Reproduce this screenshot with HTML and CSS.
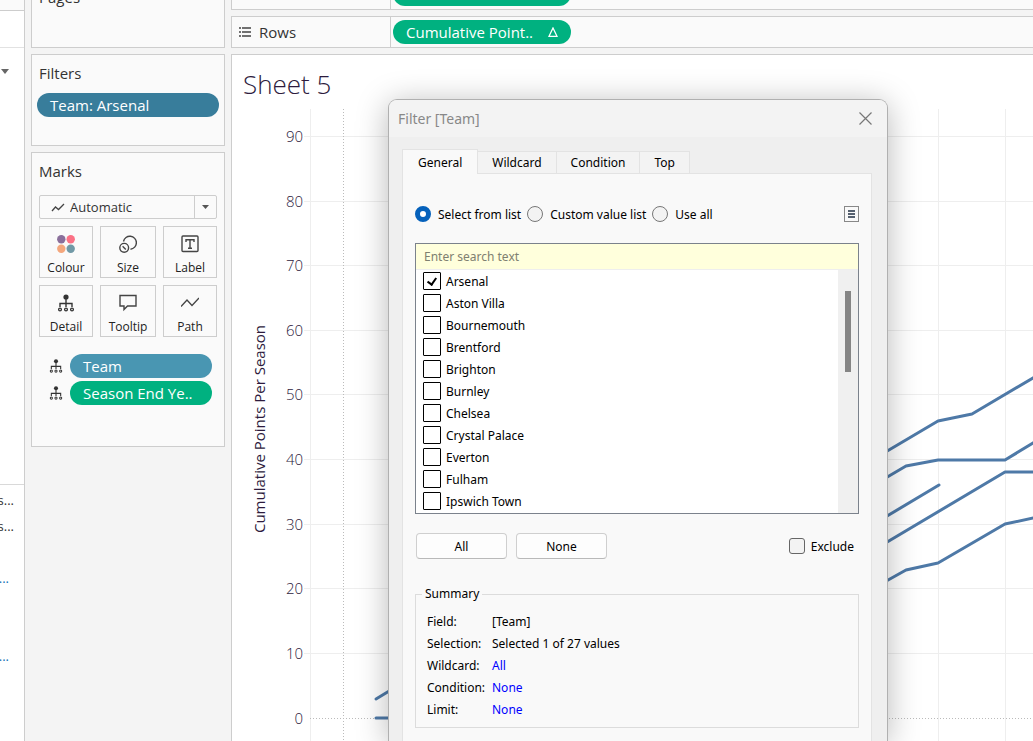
FILE: index.html
```html
<!DOCTYPE html>
<html lang="en-GB">
<head>
    <meta charset="UTF-8">
    <meta name="viewport" content="width=device-width, initial-scale=1.0">
    <title>Sheet 5</title>
    <link rel="stylesheet" href="styles.css">
</head>
<body>

    <!-- Icon used by the Detail button and the detail pills -->
    <svg class="defs" width="0" height="0">
        <symbol id="icon-detail" viewBox="0 0 18 18">
            <circle cx="9" cy="3" r="2.6" fill="#333"/>
            <path d="M9 5v8M3 13v-3.500h12V13" fill="none" stroke="#333" stroke-width="1.400"/>
            <circle cx="3" cy="15.500" r="1.400" fill="none" stroke="#333" stroke-width="1.300"/>
            <circle cx="9" cy="15.500" r="1.400" fill="none" stroke="#333" stroke-width="1.300"/>
            <circle cx="15" cy="15.500" r="1.400" fill="none" stroke="#333" stroke-width="1.300"/>
        </symbol>
    </svg>

    <aside class="data-pane">
        <div class="data-tabs"></div>
        <div class="data-source"></div>
        <div class="data-fields">
            <button class="data-menu" aria-label="Data pane menu">
                <svg width="8" height="5" viewBox="0 0 8 5"><path d="M0 0h8L4 5z" fill="#666"/></svg>
            </button>
        </div>
        <div class="data-list">
            <span class="field">s...</span>
            <span class="field">s...</span>
            <span class="field"></span>
            <span class="field calc">...</span>
            <span class="field"></span>
            <span class="field"></span>
            <span class="field calc">...</span>
        </div>
    </aside>

    <section class="cards">
        <div class="card pages"><h2>Pages</h2></div>

        <div class="card filters">
            <h2>Filters</h2>
            <button class="pill dark">Team: Arsenal</button>
        </div>

        <div class="card marks">
            <h2>Marks</h2>
            <div class="mark-type">
                <svg width="14" height="9" viewBox="0 0 14 9"><path d="M1 8l3.500-4 3 2.500L13 1" fill="none" stroke="#444" stroke-width="1.300"/></svg>
                <select aria-label="Mark type"><option>Automatic</option></select>
                <span class="arrow"><svg width="7" height="4" viewBox="0 0 7 4"><path d="M0 0h7L3.500 4z" fill="#555"/></svg></span>
            </div>
            <div class="mark-buttons">
                <button>
                    <svg width="18" height="18" viewBox="0 0 18 18">
                        <circle cx="4.300" cy="4.300" r="4.200" fill="#8a6f9b"/>
                        <circle cx="13.700" cy="4.300" r="4.200" fill="#fb7185"/>
                        <circle cx="4.300" cy="13.700" r="4.200" fill="#f4a77d"/>
                        <circle cx="13.700" cy="13.700" r="4.200" fill="#7199a6"/>
                    </svg>
                    Colour
                </button>
                <button>
                    <svg width="18" height="18" viewBox="0 0 18 18" fill="none" stroke="#444" stroke-width="1.400">
                        <path d="M4.500 6.500A6.500 6.500 0 1 1 11.500 14.200"/>
                        <circle cx="5.200" cy="12.800" r="4.400"/>
                        <path d="M3.600 11.200l3.200 3.200"/>
                    </svg>
                    Size
                </button>
                <button>
                    <svg width="18" height="18" viewBox="0 0 18 18" fill="none" stroke="#444" stroke-width="1.400">
                        <rect x="1" y="1" width="16" height="15.500" rx="1"/>
                        <path d="M5 7V4.800h8V7M9 4.800v8.400M7 13.200h4"/>
                    </svg>
                    Label
                </button>
                <button>
                    <svg width="18" height="18"><use href="#icon-detail"/></svg>
                    Detail
                </button>
                <button>
                    <svg width="18" height="18" viewBox="0 0 18 18" fill="none" stroke="#444" stroke-width="1.400">
                        <path d="M1 1.500h16v10.500H8.500L5 15.500V12H1z"/>
                    </svg>
                    Tooltip
                </button>
                <button>
                    <svg width="18" height="18" viewBox="0 0 18 18" fill="none" stroke="#444" stroke-width="1.300">
                        <path d="M0 12.500l6-6.500 5 5.500L18 4"/>
                    </svg>
                    Path
                </button>
            </div>
            <div class="mark-pill">
                <svg width="14" height="14"><use href="#icon-detail"/></svg>
                <button class="pill blue">Team</button>
            </div>
            <div class="mark-pill">
                <svg width="14" height="14"><use href="#icon-detail"/></svg>
                <button class="pill green">Season End Ye..</button>
            </div>
        </div>
    </section>

    <main class="view">
        <div class="shelf columns">
            <div class="shelf-name"></div>
            <button class="pill green" aria-label="Columns field"></button>
        </div>
        <div class="shelf">
            <div class="shelf-name">
                <svg width="12" height="10" viewBox="0 0 12 10"><path d="M0 1h2M3 1h9M0 5h2M3 5h9M0 9h2M3 9h9" stroke="#444" stroke-width="1.500"/></svg>
                Rows
            </div>
            <button class="pill green">Cumulative Point..
                <svg width="10" height="10" viewBox="0 0 10 10"><path d="M5 1L9 9.300H1z" fill="none" stroke="#fff" stroke-width="1.300"/></svg>
            </button>
        </div>
        <div class="sheet">
            <h1>Sheet 5</h1>
            <svg class="chart" role="img" aria-label="Cumulative points per season">
                <!-- gridlines, one per 10 points -->
                <g class="grid">
                    <line x1="72" x2="100%" y1="32" y2="32"/>
                    <line x1="72" x2="100%" y1="97" y2="97"/>
                    <line x1="72" x2="100%" y1="161" y2="161"/>
                    <line x1="72" x2="100%" y1="226" y2="226"/>
                    <line x1="72" x2="100%" y1="290" y2="290"/>
                    <line x1="72" x2="100%" y1="355" y2="355"/>
                    <line x1="72" x2="100%" y1="420" y2="420"/>
                    <line x1="72" x2="100%" y1="484" y2="484"/>
                    <line x1="72" x2="100%" y1="549" y2="549"/>
                    <line x1="78" x2="78" y1="5" y2="100%"/>
                    <line x1="706" x2="706" y1="5" y2="100%"/>
                    <line x1="773" x2="773" y1="5" y2="100%"/>
                    <line class="zero" x1="78" x2="100%" y1="614" y2="614"/>
                    <line class="zero" x1="111" x2="111" y1="5" y2="100%"/>
                </g>
                <g class="ticks">
                    <text x="71" y="38">90</text>
                    <text x="71" y="103">80</text>
                    <text x="71" y="167">70</text>
                    <text x="71" y="232">60</text>
                    <text x="71" y="296">50</text>
                    <text x="71" y="361">40</text>
                    <text x="71" y="426">30</text>
                    <text x="71" y="490">20</text>
                    <text x="71" y="555">10</text>
                    <text x="71" y="620">0</text>
                </g>
                <text class="axis-title" transform="translate(33 325) rotate(-90)">Cumulative Points Per Season</text>
                <g class="lines">
                    <polyline points="640,356 706,317 740,310 806,271"/>
                    <polyline points="640,382 674,362 706,356 773,356 806,336"/>
                    <polyline points="640,421 707,381"/>
                    <polyline points="640,447 773,368 806,368"/>
                    <polyline points="640,485 674,466 706,459 773,420 806,413"/>
                    <polyline points="144,595 177,575"/>
                    <polyline points="144,614 177,614"/>
                </g>
            </svg>
        </div>
    </main>

    <div class="dialog" role="dialog" aria-labelledby="dialog-title">
        <div class="title-bar">
            <span id="dialog-title">Filter [Team]</span>
            <button class="close" aria-label="Close">
                <svg width="13" height="13" viewBox="0 0 13 13"><path d="M.5.5l12 12M12.500.5l-12 12" stroke="#777" stroke-width="1.200"/></svg>
            </button>
        </div>
        <div class="tabs">
            <button class="tab active">General</button>
            <button class="tab">Wildcard</button>
            <button class="tab">Condition</button>
            <button class="tab">Top</button>
        </div>
        <div class="panel">
            <div class="modes">
                <label><input type="radio" name="mode" checked>Select from list</label>
                <label><input type="radio" name="mode">Custom value list</label>
                <label><input type="radio" name="mode">Use all</label>
                <button class="list-menu" aria-label="List options">
                    <svg width="7" height="8" viewBox="0 0 7 8"><path d="M0 1h7M0 4h7M0 7h7" stroke="#55606f" stroke-width="1.800"/></svg>
                </button>
            </div>

            <div class="list-box">
                <input type="text" class="search" placeholder="Enter search text" aria-label="Search">
                <div class="list">
                    <div class="values">
                        <label><input type="checkbox" checked>Arsenal</label>
                        <label><input type="checkbox">Aston Villa</label>
                        <label><input type="checkbox">Bournemouth</label>
                        <label><input type="checkbox">Brentford</label>
                        <label><input type="checkbox">Brighton</label>
                        <label><input type="checkbox">Burnley</label>
                        <label><input type="checkbox">Chelsea</label>
                        <label><input type="checkbox">Crystal Palace</label>
                        <label><input type="checkbox">Everton</label>
                        <label><input type="checkbox">Fulham</label>
                        <label><input type="checkbox">Ipswich Town</label>
                    </div>
                    <div class="scrollbar"><div class="thumb"></div></div>
                </div>
            </div>

            <div class="actions">
                <button class="btn">All</button>
                <button class="btn">None</button>
                <label class="exclude"><input type="checkbox">Exclude</label>
            </div>

            <fieldset class="summary">
                <legend>Summary</legend>
                <dl>
                    <dt>Field:</dt><dd>[Team]</dd>
                    <dt>Selection:</dt><dd>Selected 1 of 27 values</dd>
                    <dt>Wildcard:</dt><dd><a href="#">All</a></dd>
                    <dt>Condition:</dt><dd><a href="#">None</a></dd>
                    <dt>Limit:</dt><dd><a href="#">None</a></dd>
                </dl>
            </fieldset>
        </div>
    </div>

</body>
</html>
```
FILE: styles.css
```css
* { box-sizing: border-box; }
body { margin: 0; height: 100vh; display: flex; position: relative; overflow: hidden; background: #f4f4f4; font-family: "Open Sans", sans-serif; font-size: 15px; color: #333; }
button, input, select { font: inherit; color: inherit; margin: 0; padding: 0; border: 0; background: none; }
h1, h2, dl, dd { margin: 0; font-weight: normal; }
svg { display: block; flex: none; }
.defs { position: absolute; }

/* data pane */
.data-pane { flex: none; width: 25px; display: flex; flex-direction: column; background: #fff; border-right: 1px solid #cdcdcd; overflow: hidden; }
.data-tabs { flex: none; height: 11px; background: #fafafa; border-bottom: 1px solid #cdcdcd; }
.data-source { flex: none; height: 37px; border-bottom: 1px solid #e2e2e2; }
.data-fields { flex: none; height: 437px; padding-top: 21px; border-bottom: 1px solid #d9d9d9; }
.data-menu { display: block; margin-left: 1px; }
.data-list { padding-top: 2px; }
.field { display: flex; justify-content: flex-end; width: 14px; height: 26px; line-height: 26px; font-size: 13px; }
.field.calc { width: 9px; color: #1473b8; }

/* cards */
.cards { flex: none; width: 206px; padding: 0 6px; display: flex; flex-direction: column; gap: 6px; }
.card { background: #fafafa; border: 1px solid #cdcdcd; padding: 6px 7px; }
.card h2 { font-size: 15px; line-height: 24px; }
.pages { height: 48px; border-top: 0; padding-top: 0; overflow: hidden; }
.pages h2 { margin-top: -15px; }
.filters { height: 92px; padding-left: 5px; padding-right: 5px; }
.filters h2 { padding-left: 2px; margin-bottom: 8px; }
.marks { height: 295px; }

.pill { display: flex; align-items: center; width: 100%; height: 24px; padding: 0 13px; border-radius: 12px; color: #fff; font-size: 15px; font-weight: 500; white-space: nowrap; }
.pill.dark { background: #387d9b; }
.pill.blue { background: #4996b2; }
.pill.green { background: #00b180; }

.mark-type { display: flex; align-items: center; height: 24px; margin: 12px 0 7px; padding-left: 11px; border: 1px solid #cdcdcd; border-radius: 2px; }
.mark-type select { flex: 1; min-width: 0; padding-left: 5px; appearance: none; line-height: 22px; font-size: 13px; }
.mark-type .arrow { display: flex; align-items: center; justify-content: center; width: 22px; height: 22px; border-left: 1px solid #cdcdcd; }
.mark-buttons { display: grid; grid-template-columns: 54fr 56fr 54fr; gap: 7px; margin-bottom: 17px; }
.mark-buttons button { display: flex; flex-direction: column; align-items: center; gap: 7px; height: 52px; padding-top: 8px; border: 1px solid #cdcdcd; font-size: 12px; line-height: 16px; color: #222; }
.mark-pill { display: flex; align-items: center; gap: 7px; margin-bottom: 3px; padding: 0 5px 0 10px; }

/* shelves and sheet */
.view { flex: 1; min-width: 0; display: flex; flex-direction: column; gap: 6px; }
.shelf { flex: none; display: flex; align-items: center; height: 32px; background: #fafafa; border: 1px solid #cdcdcd; border-right: 0; }
.shelf.columns { height: 10px; align-items: flex-end; padding-bottom: 3px; border-top: 0; overflow: hidden; }
.shelf-name { display: flex; align-items: center; gap: 8px; width: 159px; height: 100%; padding-left: 7px; border-right: 1px solid #cdcdcd; }
.shelf .pill { width: 178px; margin-left: 2px; flex: none; justify-content: space-between; }
.shelf.columns .shelf-name { height: 13px; margin-bottom: -3px; }
.sheet { flex: 1; min-height: 0; display: flex; flex-direction: column; background: #fff; border: 1px solid #cdcdcd; border-right: 0; border-bottom: 0; }
.sheet h1 { padding: 9px 11px 0; font-size: 26px; font-weight: 300; line-height: 40px; color: #2d1b3d; }
.chart { flex: 1; width: 100%; min-height: 0; }
.grid line { stroke: #eee; shape-rendering: crispEdges; }
.grid .zero { stroke: #bbb; stroke-dasharray: 1 2; }
.ticks text { text-anchor: end; font-size: 15px; font-weight: 300; fill: #2d1b3d; }
.axis-title { text-anchor: middle; font-size: 15px; fill: #2d1b3d; }
.lines polyline { fill: none; stroke: #4e79a7; stroke-width: 3; stroke-linecap: round; stroke-linejoin: round; }

/* filter dialog */
.dialog { position: absolute; left: 388px; top: 99px; bottom: 0; width: 500px; background: #efefef; border: 1px solid #b0b0b0; border-bottom: 0; border-radius: 9px 9px 0 0; box-shadow: 0 4px 32px rgba(0, 0, 0, .28); font-family: "Noto Sans", sans-serif; font-size: 12px; color: #000; display: flex; flex-direction: column; }
.title-bar { flex: none; display: flex; align-items: center; justify-content: space-between; height: 37px; padding: 0 15px 0 9px; background: #f3f3f3; border-radius: 8px 8px 0 0; font-size: 14px; color: #888; }
.tabs { flex: none; display: flex; align-items: flex-end; height: 36px; padding: 0 13px; }
.tab { height: 22px; padding: 0 14px; background: #f3f3f3; border: 1px solid #e3e3e3; border-left: 0; border-bottom: 0; }
.tab.active { height: 25px; margin-bottom: -1px; padding: 0 15px; background: #f9f9f9; border-left: 1px solid #e3e3e3; position: relative; }
.panel { flex: 1; margin: 0 15px 0 13px; padding: 32px 12px 0; background: #f9f9f9; border: 1px solid #e3e3e3; border-bottom: 0; }
.modes { display: flex; align-items: center; gap: 6px; height: 16px; margin-bottom: 21px; }
.modes label, .exclude { display: flex; align-items: center; gap: 7px; }
.modes input { appearance: none; width: 16px; height: 16px; border: 1px solid #777; border-radius: 50%; background: #f3f3f3; }
.modes input:checked { border: 5px solid #0561bb; background: #fff; }
.list-menu { display: flex; align-items: center; justify-content: center; width: 15px; height: 16px; margin-left: auto; border: 1px solid #888; }

.list-box { border: 1px solid #7b828c; background: #fff; }
.search { display: block; width: 100%; height: 26px; padding: 0 8px; background: #ffffdc; border-bottom: 1px solid #eee; }
.search::placeholder { color: #808070; opacity: 1; }
.list { display: flex; }
.values { flex: 1; padding: 0 0 1px 7px; }
.values label { display: flex; align-items: center; gap: 5px; height: 22px; }
.values input { appearance: none; width: 18px; height: 18px; border: 1px solid #000; border-radius: 1px; background: #fff; }
.values input:checked::before { content: ""; display: block; width: 4px; height: 7px; margin: 3px 0 0 5px; border: solid #000; border-width: 0 2px 2px 0; transform: rotate(35deg); }
.scrollbar { width: 20px; padding: 21px 7px 0 7px; background: #f0f0f0; }
.thumb { height: 81px; background: #858585; }

.actions { display: flex; align-items: center; gap: 9px; padding: 19px 5px 0 1px; }
.btn { width: 91px; height: 26px; background: #fdfdfd; border: 1px solid #cfcfcf; border-bottom-color: #b9b9b9; border-radius: 4px; }
.exclude { gap: 6px; margin-left: auto; }
.exclude input { appearance: none; width: 16px; height: 16px; border: 1px solid #666; border-radius: 3px; background: #f3f3f3; }
.summary { margin: 26px 0 0; padding: 8px 11px 6px; border: 1px solid #dcdcdc; }
.summary legend { margin-left: -5px; padding: 0 3px; line-height: 18px; }
.summary dl { display: grid; grid-template-columns: 65px 1fr; line-height: 22px; }
.summary a { color: #00f; text-decoration: none; }
```
